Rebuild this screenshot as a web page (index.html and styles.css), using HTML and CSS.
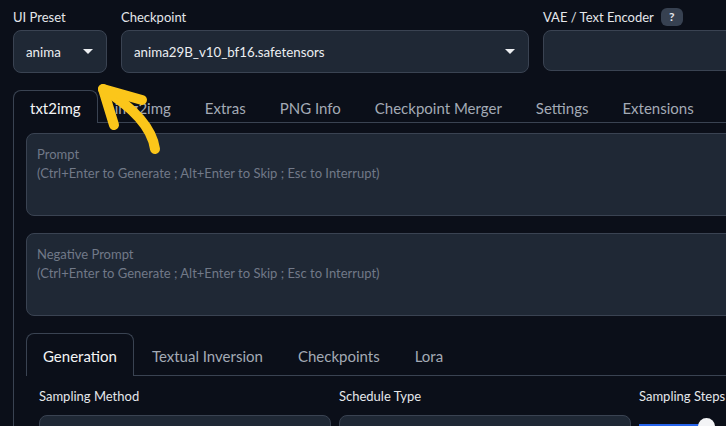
FILE: index.html
```html
<!DOCTYPE html>
<html lang="en">
  <head>
    <title>Stable Diffusion</title>
    <meta charset="UTF-8" />
    <meta name="viewport" content="width=device-width" />
    <link rel="stylesheet" href="styles.css">
  </head>
  <body>
    <div class="top-row">
      <div class="field preset">
        <span class="label">UI Preset</span>
        <div class="dropdown">anima<span class="caret"></span></div>
      </div>
      <div class="field checkpoint">
        <span class="label">Checkpoint</span>
        <div class="dropdown">anima29B_v10_bf16.safetensors<span class="caret"></span></div>
      </div>
      <div class="field vae">
        <span class="label">VAE / Text Encoder <span class="help">?</span></span>
        <div class="dropdown"></div>
      </div>
    </div>

    <div class="tabs">
      <div class="tab-nav">
        <button class="tab selected">txt2img</button>
        <button class="tab">img2img</button>
        <button class="tab">Extras</button>
        <button class="tab">PNG Info</button>
        <button class="tab">Checkpoint Merger</button>
        <button class="tab">Settings</button>
        <button class="tab">Extensions</button>
      </div>
      <div class="tab-panel">
        <textarea class="prompt" placeholder="Prompt&#10;(Ctrl+Enter to Generate ; Alt+Enter to Skip ; Esc to Interrupt)"></textarea>
        <textarea class="prompt" placeholder="Negative Prompt&#10;(Ctrl+Enter to Generate ; Alt+Enter to Skip ; Esc to Interrupt)"></textarea>

        <div class="sub-nav">
          <button class="sub-tab selected">Generation</button>
          <button class="sub-tab">Textual Inversion</button>
          <button class="sub-tab">Checkpoints</button>
          <button class="sub-tab">Lora</button>
        </div>
        <div class="gen-row">
          <div class="field sampler">
            <span class="label">Sampling Method</span>
            <div class="dropdown"></div>
          </div>
          <div class="field scheduler">
            <span class="label">Schedule Type</span>
            <div class="dropdown"></div>
          </div>
          <div class="field steps">
            <span class="label">Sampling Steps</span>
            <div class="slider"><span class="fill"></span><span class="thumb"></span></div>
          </div>
        </div>
      </div>
    </div>

    <!-- hand-drawn pointer toward the preset menu -->
    <svg class="pointer" width="200" height="180" viewBox="0 0 200 180">
      <g fill="none" stroke="#fbc61a" stroke-width="10" stroke-linecap="round" stroke-linejoin="round">
        <path d="M155 149 C152 128 134 108 103 89" />
        <path d="M114 125 L103 89 L142 100" />
      </g>
    </svg>
  </body>
</html>
```

FILE: styles.css
```css
* {
  box-sizing: border-box;
}

body {
  margin: 0;
  width: 760px;
  height: 426px;
  overflow: hidden;
  font-family: "Lato", "Noto Sans", sans-serif;
  color: #e5e7eb;
  background-color: #0b0f19;
  position: relative;
}

.top-row {
  display: flex;
  gap: 14px;
  padding: 8px 13px 0;
}

.field {
  display: flex;
  flex-direction: column;
}

.label {
  font-size: 13px;
  line-height: 18px;
  height: 18px;
  margin-bottom: 4px;
  display: flex;
  align-items: center;
  gap: 7px;
  color: #e5e7eb;
}

.help {
  display: inline-flex;
  align-items: center;
  justify-content: center;
  width: 22px;
  height: 18px;
  border-radius: 6px;
  background: #374151;
  font-size: 12px;
  font-weight: bold;
}

.dropdown {
  height: 43px;
  border: 1px solid #3a4352;
  border-radius: 8px;
  background: #1f2835;
  display: flex;
  align-items: center;
  justify-content: space-between;
  padding: 0 12px;
  font-size: 13.3px;
  color: #eceef1;
}

.caret {
  width: 0;
  height: 0;
  border-left: 5px solid transparent;
  border-right: 5px solid transparent;
  border-top: 5px solid #eceef1;
  margin-right: 1px;
}

.preset {
  width: 94px;
}

.checkpoint {
  width: 408px;
}

.vae {
  width: 200px;
}

.vae .dropdown {
  height: 41px;
}

.tabs {
  margin: 17px 0 0 13px;
}

.tab-nav,
.sub-nav {
  display: flex;
  border-bottom: 1px solid #3a4352;
}

.tab,
.sub-tab {
  font-family: inherit;
  background: none;
  border: 1px solid transparent;
  border-bottom: none;
  color: #a3aab5;
  cursor: pointer;
  margin-bottom: -1px;
  white-space: nowrap;
}

.tab {
  height: 33px;
  font-size: 15px;
  padding: 2px 16px 0;
}

.tab.selected,
.sub-tab.selected {
  border-color: #3a4352;
  border-radius: 8px 8px 0 0;
  background: #0b0f19;
  color: #f3f4f6;
}

.tab-panel {
  border-left: 1px solid #3a4352;
  padding: 10px 0 0 12px;
  display: flex;
  flex-direction: column;
  gap: 17px;
}

.prompt {
  display: block;
  width: 720px;
  height: 83px;
  resize: none;
  border: 1px solid #3a4352;
  border-radius: 8px;
  background: #1f2835;
  padding: 11px 10px;
  font-family: inherit;
  font-size: 13px;
  line-height: 19px;
}

.prompt::placeholder {
  color: #717988;
}

.sub-tab {
  height: 43px;
  font-size: 15px;
  padding: 1px 16px 0;
  margin-right: 1px;
}

.gen-row {
  display: flex;
  gap: 8px;
  padding-left: 13px;
  margin-top: -6px;
}

.gen-row .label {
  margin-bottom: 10px;
}

.sampler,
.scheduler {
  width: 292px;
}

.steps {
  width: 120px;
}

.slider {
  position: relative;
  height: 20px;
  margin-top: 0;
}

.fill {
  position: absolute;
  left: 0;
  top: 9px;
  width: 70px;
  height: 8px;
  background: #2563eb;
}

.thumb {
  position: absolute;
  left: 59px;
  top: 3px;
  width: 17px;
  height: 17px;
  border-radius: 50%;
  background: #f3f4f6;
}

.pointer {
  position: absolute;
  left: 0;
  top: 0;
  pointer-events: none;
}
```
